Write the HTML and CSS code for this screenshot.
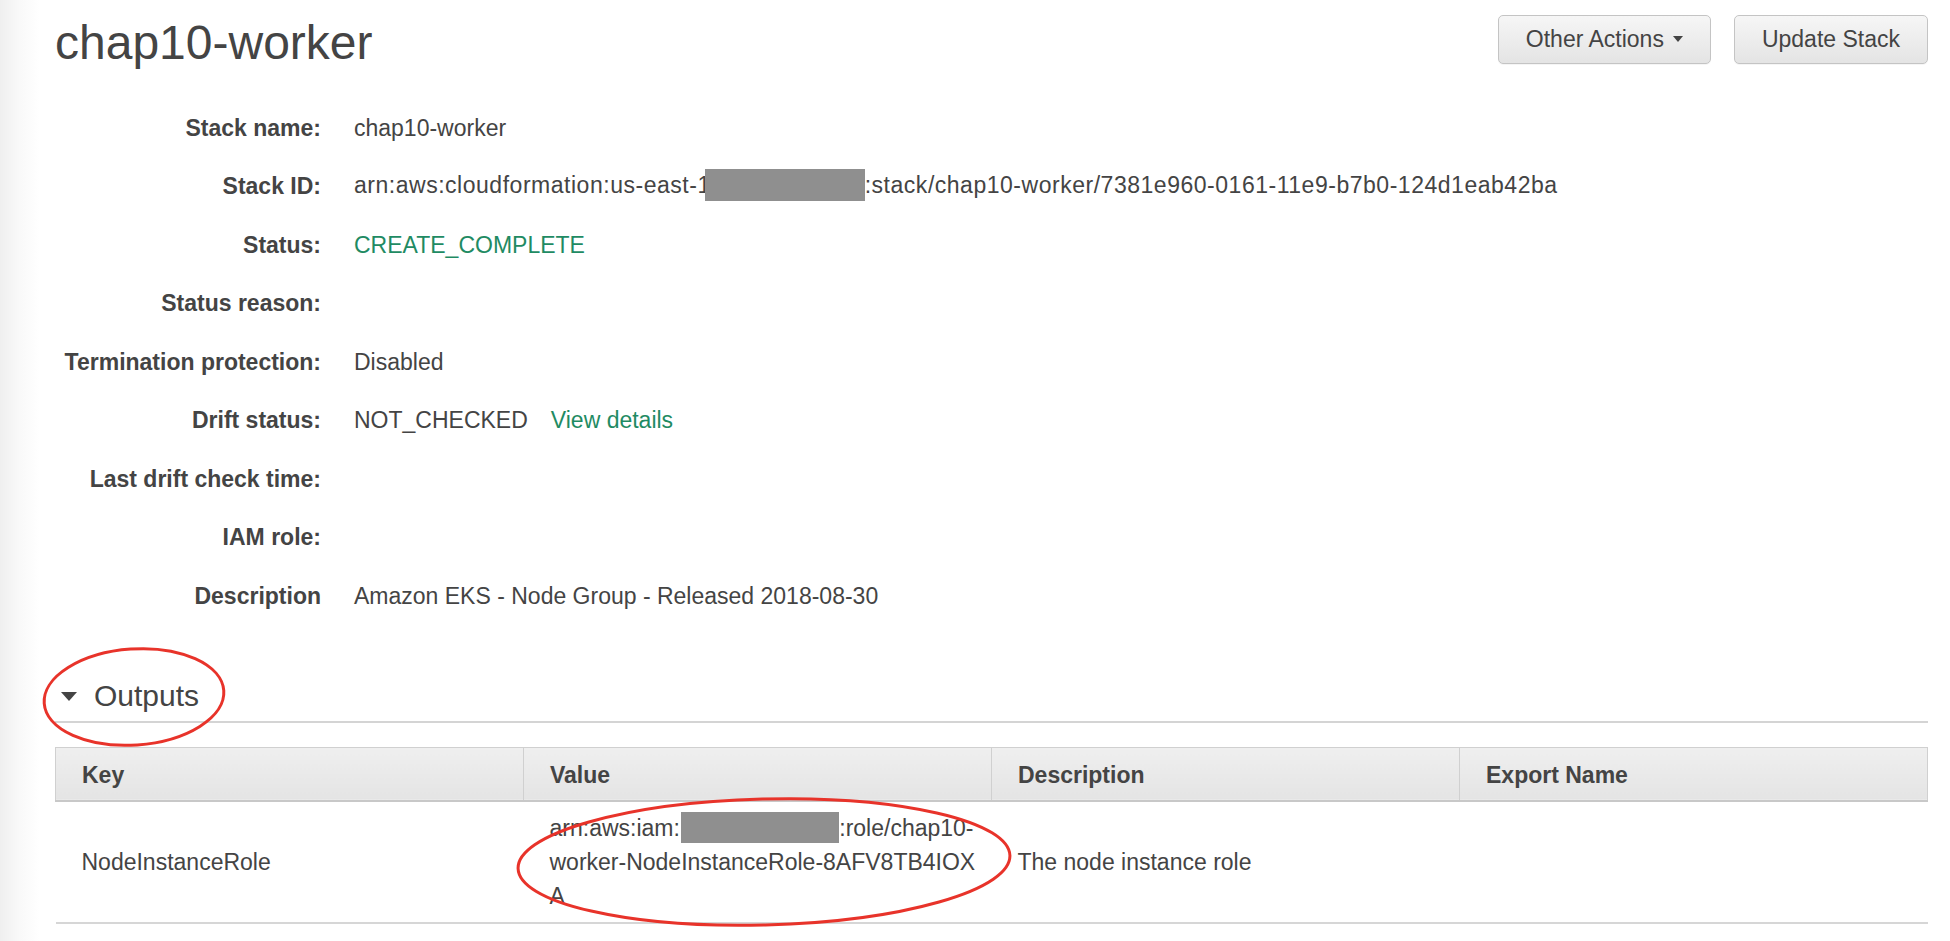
FILE: index.html
```html
<!DOCTYPE html>
<html lang="en">
<head>
<meta charset="utf-8">
<title>chap10-worker</title>
<link rel="stylesheet" href="styles.css">
</head>
<body>
<div class="page">
  <header class="page-head">
    <h1 class="title">chap10-worker</h1>
    <div class="actions">
      <button class="btn">Other Actions <span class="caret"></span></button>
      <button class="btn">Update Stack</button>
    </div>
  </header>

  <dl class="details">
    <div class="row"><dt>Stack name:</dt><dd>chap10-worker</dd></div>
    <div class="row"><dt>Stack ID:</dt><dd class="arn">arn:aws:cloudformation:us-east-1<span class="redact redact-id"></span>:stack/chap10-worker/7381e960-0161-11e9-b7b0-124d1eab42ba</dd></div>
    <div class="row"><dt>Status:</dt><dd class="ok">CREATE_COMPLETE</dd></div>
    <div class="row"><dt>Status reason:</dt><dd></dd></div>
    <div class="row"><dt>Termination protection:</dt><dd>Disabled</dd></div>
    <div class="row"><dt>Drift status:</dt><dd>NOT_CHECKED<a class="link" href="#">View details</a></dd></div>
    <div class="row"><dt>Last drift check time:</dt><dd></dd></div>
    <div class="row"><dt>IAM role:</dt><dd></dd></div>
    <div class="row"><dt>Description</dt><dd>Amazon EKS - Node Group - Released 2018-08-30</dd></div>
  </dl>

  <section class="outputs">
    <h2 class="section-title"><span class="tri"></span>Outputs</h2>
    <table class="grid">
      <thead>
        <tr><th>Key</th><th>Value</th><th>Description</th><th>Export Name</th></tr>
      </thead>
      <tbody>
        <tr>
          <td>NodeInstanceRole</td>
          <td class="value">arn:aws:iam::<span class="redact redact-val"></span>:role/chap10-<br>worker-NodeInstanceRole-8AFV8TB4IOX<br>A</td>
          <td>The node instance role</td>
          <td></td>
        </tr>
      </tbody>
    </table>
  </section>

  <svg class="annot" width="1950" height="941" viewBox="0 0 1950 941">
    <ellipse cx="134" cy="697" rx="90" ry="48" fill="none" stroke="#e8332a" stroke-width="3" transform="rotate(-4 134 697)"/>
    <ellipse cx="764" cy="862" rx="246" ry="63" fill="none" stroke="#e8332a" stroke-width="3" transform="rotate(-1.5 764 862)"/>
  </svg>
</div>
</body>
</html>
```

FILE: styles.css
```css
html, body {
  margin: 0;
  padding: 0;
}

body {
  background: linear-gradient(to right, #efefef 0, #f9f9f9 20px, #ffffff 40px);
  font-family: "Liberation Sans", Arial, Helvetica, sans-serif;
  color: #444444;
  font-size: 23px;
}

.page {
  position: relative;
  box-sizing: border-box;
  min-height: 941px;
  padding: 15px 22px 0 55px;
}

.page-head {
  display: flex;
  justify-content: space-between;
  align-items: center;
  height: 48px;
}

.title {
  margin: 0;
  font-size: 48px;
  font-weight: normal;
  line-height: 1;
  color: #444444;
  padding-top: 8px;
}

.actions {
  display: flex;
  gap: 23px;
}

.btn {
  display: flex;
  align-items: center;
  gap: 9px;
  height: 49px;
  padding: 0 27px;
  border: 1px solid #c4c4c4;
  border-radius: 5px;
  background: linear-gradient(#f6f6f6, #e4e4e4);
  font-family: "Liberation Sans", Arial, Helvetica, sans-serif;
  font-size: 23px;
  color: #444444;
  box-shadow: 0 1px 0 rgba(0, 0, 0, 0.04);
}

.caret {
  width: 0;
  height: 0;
  border-left: 5px solid transparent;
  border-right: 5px solid transparent;
  border-top: 6px solid #444444;
}

.details {
  margin: 36px 0 0;
}

.row {
  display: grid;
  grid-template-columns: 266px 1fr;
  column-gap: 33px;
  height: 58.5px;
  align-items: center;
}

.row dt {
  text-align: right;
  font-weight: bold;
}

.row dd {
  margin: 0;
  white-space: nowrap;
}

.arn {
  letter-spacing: 0.52px;
}

.ok {
  color: #1f8b63;
}

.link {
  color: #1f8b63;
  text-decoration: none;
  margin-left: 23px;
}

.redact {
  display: inline-block;
  background: #8f8f8f;
  vertical-align: middle;
}

.redact-id {
  width: 160px;
  height: 32px;
  margin-left: -6px;
  margin-top: -4px;
}

.redact-val {
  width: 158px;
  height: 31px;
  margin-left: -5px;
  margin-top: -3px;
}

.outputs {
  margin-top: 50px;
}

.section-title {
  display: flex;
  align-items: center;
  gap: 17px;
  margin: 0;
  height: 40px;
  padding: 0 0 5px 6px;
  border-bottom: 2px solid #d4d4d4;
  font-size: 30px;
  font-weight: normal;
  color: #444444;
}

.tri {
  width: 0;
  height: 0;
  border-left: 8px solid transparent;
  border-right: 8px solid transparent;
  border-top: 9px solid #444444;
  margin-top: 2px;
}

.grid {
  width: 100%;
  margin-top: 24px;
  border-collapse: collapse;
  table-layout: fixed;
}

.grid th {
  height: 48px;
  padding: 4px 26px 0;
  text-align: left;
  font-weight: bold;
  background: linear-gradient(#efefef, #e4e4e4);
  border: 1px solid #d0d0d0;
  border-bottom: 2px solid #c8c8c8;
}

.grid td {
  padding: 9px 26px;
  line-height: 34px;
  vertical-align: middle;
  border-bottom: 2px solid #d6d6d6;
}

.grid .value {
  white-space: nowrap;
  padding-right: 6px;
}

.annot {
  position: absolute;
  left: 0;
  top: 0;
  pointer-events: none;
}
```
